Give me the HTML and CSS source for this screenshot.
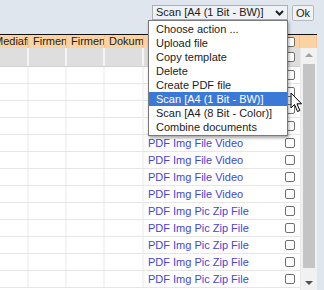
FILE: index.html
```html
<!DOCTYPE html>
<html lang="de">
<head>
<meta charset="UTF-8">
<title>Dokumente</title>
<link rel="stylesheet" href="styles.css">
</head>
<body>

<div class="toolbar">
    <div class="action-select">
        <span>Scan [A4 (1 Bit - BW)]</span>
        <svg class="chevron" width="9" height="6" viewBox="0 0 9 6"><path d="M1 1 L4.5 4.5 L8 1" fill="none" stroke="#222" stroke-width="2"/></svg>
    </div>
    <button class="ok-button">Ok</button>
</div>

<ul class="action-list">
    <li>Choose action ...</li>
    <li>Upload file</li>
    <li>Copy template</li>
    <li>Delete</li>
    <li>Create PDF file</li>
    <li class="active">Scan [A4 (1 Bit - BW)]</li>
    <li>Scan [A4 (8 Bit - Color)]</li>
    <li>Combine documents</li>
</ul>

<svg class="cursor" width="13" height="21" viewBox="0 0 13 21"><path d="M1 1 L1 16 L4.5 12.5 L7.5 19.5 L9.8 18.5 L7 11.8 L11.5 11.8 Z" fill="#fff" stroke="#000" stroke-width="1" stroke-linejoin="round"/></svg>

<div class="grid">
    <div class="grid-head">
        <div class="cell">Mediafile</div>
        <div class="cell">Firmenname</div>
        <div class="cell">Firmennummer</div>
        <div class="cell">Dokumenttyp</div>
        <div class="cell"></div>
        <div class="cell check"><span class="box"></span></div>
        <div class="cell"></div>
    </div>
    <div class="grid-body">
        <div class="rows">
            <div class="row filter">
                <div class="cell"></div><div class="cell"></div><div class="cell"></div><div class="cell"></div><div class="cell"></div>
                <div class="cell check"><span class="box"></span></div>
            </div>
            <div class="row"><div class="cell"></div><div class="cell"></div><div class="cell"></div><div class="cell"></div><div class="cell"><a href="#">PDF Img File Video</a></div><div class="cell check"><span class="box"></span></div></div>
            <div class="row"><div class="cell"></div><div class="cell"></div><div class="cell"></div><div class="cell"></div><div class="cell"><a href="#">PDF Img File Video</a></div><div class="cell check"><span class="box"></span></div></div>
            <div class="row"><div class="cell"></div><div class="cell"></div><div class="cell"></div><div class="cell"></div><div class="cell"><a href="#">PDF Img File Video</a></div><div class="cell check"><span class="box"></span></div></div>
            <div class="row"><div class="cell"></div><div class="cell"></div><div class="cell"></div><div class="cell"></div><div class="cell"><a href="#">PDF Img File Video</a></div><div class="cell check"><span class="box"></span></div></div>
            <div class="row"><div class="cell"></div><div class="cell"></div><div class="cell"></div><div class="cell"></div><div class="cell"><a href="#">PDF Img File Video</a></div><div class="cell check"><span class="box"></span></div></div>
            <div class="row"><div class="cell"></div><div class="cell"></div><div class="cell"></div><div class="cell"></div><div class="cell"><a href="#">PDF Img File Video</a></div><div class="cell check"><span class="box"></span></div></div>
            <div class="row"><div class="cell"></div><div class="cell"></div><div class="cell"></div><div class="cell"></div><div class="cell"><a href="#">PDF Img File Video</a></div><div class="cell check"><span class="box"></span></div></div>
            <div class="row"><div class="cell"></div><div class="cell"></div><div class="cell"></div><div class="cell"></div><div class="cell"><a href="#">PDF Img File Video</a></div><div class="cell check"><span class="box"></span></div></div>
            <div class="row"><div class="cell"></div><div class="cell"></div><div class="cell"></div><div class="cell"></div><div class="cell"><a href="#">PDF Img Pic Zip File</a></div><div class="cell check"><span class="box"></span></div></div>
            <div class="row"><div class="cell"></div><div class="cell"></div><div class="cell"></div><div class="cell"></div><div class="cell"><a href="#">PDF Img Pic Zip File</a></div><div class="cell check"><span class="box"></span></div></div>
            <div class="row"><div class="cell"></div><div class="cell"></div><div class="cell"></div><div class="cell"></div><div class="cell"><a href="#">PDF Img Pic Zip File</a></div><div class="cell check"><span class="box"></span></div></div>
            <div class="row"><div class="cell"></div><div class="cell"></div><div class="cell"></div><div class="cell"></div><div class="cell"><a href="#">PDF Img Pic Zip File</a></div><div class="cell check"><span class="box"></span></div></div>
            <div class="row"><div class="cell"></div><div class="cell"></div><div class="cell"></div><div class="cell"></div><div class="cell"><a href="#">PDF Img Pic Zip File</a></div><div class="cell check"><span class="box"></span></div></div>
        </div>
        <div class="scrollbar">
            <span class="arrow up"></span>
            <span class="thumb"></span>
            <span class="arrow down"></span>
        </div>
    </div>
</div>

</body>
</html>
```

FILE: styles.css
```css
body {
    margin: 0;
    height: 290px;
    overflow: hidden;
    background-color: #dfe6ee;
    font-family: "Liberation Sans", Arial, sans-serif;
    font-size: 11px;
    color: #222;
}

/* Aktionsauswahl oben rechts */
.toolbar {
    height: 34px;
    box-sizing: border-box;
    padding: 5px 10px 0 0;
    display: flex;
    justify-content: flex-end;
    align-items: flex-start;
    gap: 4px;
}

.action-select {
    width: 136px;
    height: 15px;
    box-sizing: border-box;
    padding: 0 3px 0 3px;
    display: flex;
    align-items: center;
    justify-content: space-between;
    background-color: #eef1f5;
    border: 1px solid #a9b0b8;
    line-height: 13px;
}

.chevron {
    display: block;
}

.ok-button {
    height: 16px;
    width: 22px;
    padding: 0;
    font-family: inherit;
    font-size: 11px;
    color: #222;
    background-color: #f2f2f2;
    border: 1px solid #b3b8be;
    border-radius: 2px;
}

/* geoeffnete Liste */
.action-list {
    position: absolute;
    left: 148px;
    top: 20px;
    width: 140px;
    margin: 0;
    padding: 1px 0;
    list-style: none;
    box-sizing: border-box;
    background-color: #fff;
    border: 1px solid #7a7a7a;
    box-shadow: 1px 2px 3px rgba(0, 0, 0, 0.35);
    z-index: 2;
}

.action-list li {
    height: 14px;
    line-height: 14px;
    padding-left: 7px;
    white-space: nowrap;
}

.action-list li.active {
    background-color: #3b79d8;
    color: #fff;
}

.cursor {
    position: absolute;
    left: 290px;
    top: 92px;
    z-index: 3;
}

/* Tabelle */
.grid {
    margin-left: -10px;
    width: 327px;
    border-top: 1px solid #111;
    background-color: #fff;
}

.grid-head {
    display: grid;
    grid-template-columns: 39px 38px 38px 39px 136px 20px 17px;
    height: 13px;
    background-color: #fbd3a3;
}

.grid-head .cell {
    padding-left: 4px;
    line-height: 13px;
    white-space: nowrap;
    overflow: hidden;
    border-right: 1px solid #f5c58f;
}

.grid-body {
    display: flex;
    height: 242px;
    overflow: hidden;
}

.rows {
    width: 310px;
}

.row {
    display: grid;
    grid-template-columns: 39px 38px 38px 39px 136px 20px;
    height: 16px;
    border-bottom: 1px solid #e6e6e6;
}

.row.filter {
    height: 18px;
    background-color: #dedede;
    border-bottom-color: #d2d2d2;
}

.row .cell {
    border-right: 2px solid #f4f4f4;
    line-height: 16px;
    white-space: nowrap;
    overflow: hidden;
}

.row .cell:nth-child(5) {
    padding-left: 4px;
    border-right: none;
}

.row .cell.check {
    border-right: none;
}

.cell.check {
    display: flex;
    align-items: center;
    justify-content: center;
    padding: 0;
}

.box {
    width: 10px;
    height: 10px;
    box-sizing: border-box;
    border: 1px solid #707070;
    border-radius: 2px;
    background-color: #fff;
}

a {
    color: #4444d6;
    text-decoration: none;
}

/* Scrollleiste */
.scrollbar {
    width: 17px;
    display: flex;
    flex-direction: column;
    align-items: center;
    background-color: #f1f1f1;
    border-left: 1px solid #e8e8e8;
    box-sizing: border-box;
}

.thumb {
    flex: 1;
    width: 12px;
    margin: 2px 0 8px;
    background-color: #c4c4c4;
}

.arrow {
    width: 0;
    height: 0;
    margin: 5px 0;
    border-left: 4px solid transparent;
    border-right: 4px solid transparent;
}

.arrow.up {
    border-bottom: 4px solid #a3a3a3;
}

.arrow.down {
    border-top: 4px solid #505050;
}
```
